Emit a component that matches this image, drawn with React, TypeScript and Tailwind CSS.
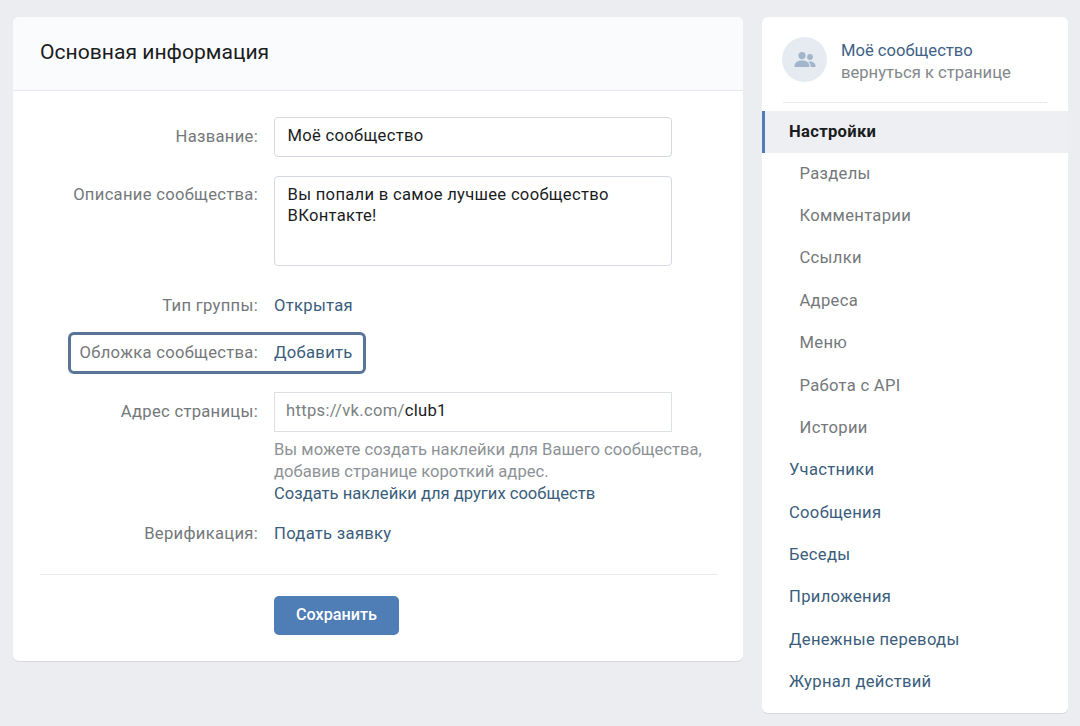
const LABEL = "w-[261px] pr-4 text-right text-[#74787b] shrink-0 leading-[22px] tracking-[0.3px]";
const LINK = "text-[#3a5d7c] tracking-[0.3px]";

function Row({ label, children, className }: { label: string; children: React.ReactNode; className?: string }) {
  return (
    <div className={"flex items-center " + (className ?? "")}>
      <div className={LABEL}>{label}</div>
      {children}
    </div>
  );
}

const SUB_ITEMS = ["Разделы", "Комментарии", "Ссылки", "Адреса", "Меню", "Работа с API", "Истории"];
const MAIN_ITEMS = ["Участники", "Сообщения", "Беседы", "Приложения", "Денежные переводы", "Журнал действий"];

function GroupIcon() {
  return (
    <svg width="24" height="24" viewBox="0 0 24 24" fill="#a3b5cc" aria-hidden="true">
      <circle cx="9" cy="7.6" r="3.6" />
      <circle cx="17" cy="9" r="2.9" />
      <path d="M1.5 18.2c0-3.9 3.4-5.8 7.5-5.8s7.5 1.9 7.5 5.8c0 .5-.3.8-.8.8H2.3c-.5 0-.8-.3-.8-.8z" />
      <path d="M17.6 19h4.400c.4 0 .6-.3.6-.7 0-3-2.500-4.800-5.700-4.800-.6 0-1.100.1-1.600.2 1.500 1.100 2.400 2.700 2.400 4.600 0 .3 0 .5-.1.700z" />
    </svg>
  );
}

export default function App() {
  return (
    <div
      className="flex h-[726px] w-[1080px] items-start gap-[19px] overflow-hidden bg-[#ebedf0] pl-[13px] pt-[17px] text-[16.6px] text-[#1b1c1e]"
      style={{ fontFamily: "Roboto, sans-serif" }}
    >
      <main className="h-[644px] w-[730px] shrink-0 overflow-hidden rounded-md bg-white shadow-[0_1px_0_0_#d7d8db]">
        <header className="flex h-[74px] items-center border-b border-[#e7e8ec] bg-[#fafbfc] pb-[3px] pl-[27px] text-[21.1px]">
          Основная информация
        </header>

        <div className="pt-[26px]">
          <Row label="Название:" className="[&>div:first-child]:pb-[1px]">
            <div className="flex h-10 w-[398px] items-center rounded-[4px] border border-[#d3d9de] pb-[2px] pl-[12.500px] tracking-[0.3px]">Моё сообщество</div>
          </Row>

          <div className="mt-[19px] flex items-start">
            <div className={LABEL + " pt-[8px]"}>Описание сообщества:</div>
            <div className="h-[90px] w-[398px] rounded-[4px] border border-[#d3d9de] pl-[12.500px] pt-[7px] leading-[21px] tracking-[0.3px]">
              Вы попали в самое лучшее сообщество
              <br />
              ВКонтакте!
            </div>
          </div>

          <Row label="Тип группы:" className="mt-[28px]">
            <span className={LINK}>Открытая</span>
          </Row>

          <div className="ml-[55px] mt-[13px] flex h-[42px] w-[298px] items-center rounded-md border-[3px] border-[#5a7498] pt-[1px]">
            <div className="w-[203px] shrink-0 whitespace-nowrap pr-4 text-right tracking-[0.3px] text-[#74787b]">Обложка сообщества:</div>
            <span className={LINK}>Добавить</span>
          </div>

          <Row label="Адрес страницы:" className="mt-[18px]">
            <div className="flex h-10 w-[398px] items-center border border-[#dcdfe3] pl-[11px] tracking-[0.3px]">
              <span className="text-[#7b7f83]">https://vk.com/</span>
              <span>club1</span>
            </div>
          </Row>

          <div className="ml-[261px] mt-[7px] leading-[22px] text-[#8d9296]">
            Вы можете создать наклейки для Вашего сообщества,
            <br />
            добавив странице короткий адрес.
            <br />
            <span className="text-[#3a5d7c]">Создать наклейки для других сообществ</span>
          </div>

          <Row label="Верификация:" className="mt-[17px]">
            <span className={LINK}>Подать заявку</span>
          </Row>

          <div className="ml-[27px] mt-[27px] w-[677px] border-t border-[#e7e8ec]" />

          <button className="ml-[261px] mt-[21px] h-[39px] w-[125px] rounded-[5px] bg-[#4f7db5] text-[16.2px] font-medium text-white">
            Сохранить
          </button>
        </div>
      </main>

      <aside className="h-[696px] w-[306px] shrink-0 overflow-hidden rounded-md bg-white shadow-[0_1px_0_0_#d7d8db]">
        <div className="mx-[21px] flex h-[86px] items-center gap-[14px] border-b border-[#e7e8ec]">
          <div className="-ml-px flex h-[45px] w-[45px] items-center justify-center rounded-full bg-[#e5ebf1]">
            <GroupIcon />
          </div>
          <div className="pt-[4px] leading-[22px]">
            <div className="text-[#3f6186]">Моё сообщество</div>
            <div className="text-[#83888c]">вернуться к странице</div>
          </div>
        </div>

        <nav className="pt-[8px]">
          <div className="flex h-[42px] items-center border-l-[3px] border-[#4f7db5] bg-[#edeff2] pl-6 font-bold tracking-[0.3px]">Настройки</div>
          {SUB_ITEMS.map((item) => (
            <div key={item} className="flex h-[42.36px] items-center pl-[37.500px] tracking-[0.3px] text-[#74787b]">{item}</div>
          ))}
          {MAIN_ITEMS.map((item) => (
            <div key={item} className={"flex h-[42.36px] items-center pl-[27px] " + LINK}>{item}</div>
          ))}
        </nav>
      </aside>
    </div>
  );
}
